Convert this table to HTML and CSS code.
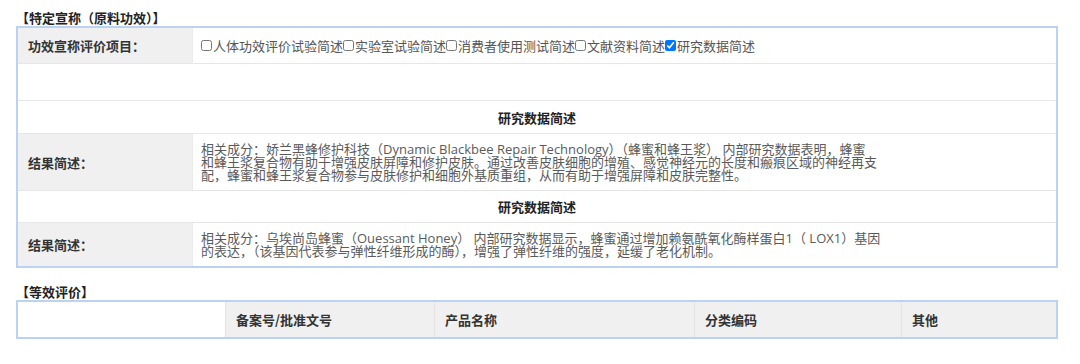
FILE: index.html
```html
<!DOCTYPE html>
<html lang="zh-CN">
<head>
<meta charset="utf-8">
<title>特定宣称</title>
<link rel="stylesheet" href="styles.css">
</head>
<body>
<div class="page">
  <div class="section-title">【特定宣称（原料功效）】</div>
  <table class="claim-table">
    <colgroup><col class="col-label"><col></colgroup>
    <tr class="row-items">
      <th class="label">功效宣称评价项目：</th>
      <td class="value">
        <label class="opt"><input type="checkbox">人体功效评价试验简述</label><label class="opt"><input type="checkbox">实验室试验简述</label><label class="opt"><input type="checkbox">消费者使用测试简述</label><label class="opt"><input type="checkbox">文献资料简述</label><label class="opt"><input type="checkbox" checked>研究数据简述</label>
      </td>
    </tr>
    <tr class="row-empty"><td colspan="2"></td></tr>
    <tr class="row-head"><td colspan="2">研究数据简述</td></tr>
    <tr class="row-result row-tall">
      <th class="label">结果简述：</th>
      <td class="value">
        <div class="desc">相关成分：娇兰黑蜂修护科技（Dynamic Blackbee Repair Technology）（蜂蜜和蜂王浆） 内部研究数据表明，蜂蜜<br>和蜂王浆复合物有助于增强皮肤屏障和修护皮肤。通过改善皮肤细胞的增殖、感觉神经元的长度和瘢痕区域的神经再支<br>配，蜂蜜和蜂王浆复合物参与皮肤修护和细胞外基质重组，从而有助于增强屏障和皮肤完整性。</div>
      </td>
    </tr>
    <tr class="row-head row-head-2"><td colspan="2">研究数据简述</td></tr>
    <tr class="row-result row-last">
      <th class="label">结果简述：</th>
      <td class="value">
        <div class="desc">相关成分：乌埃尚岛蜂蜜（Ouessant Honey） 内部研究数据显示，蜂蜜通过增加赖氨酰氧化酶样蛋白1（ LOX1）基因<br>的表达，（该基因代表参与弹性纤维形成的酶），增强了弹性纤维的强度，延缓了老化机制。</div>
      </td>
    </tr>
  </table>

  <div class="section-title section-gap">【等效评价】</div>
  <table class="equiv-table">
    <colgroup>
      <col class="c1"><col class="c2"><col class="c3"><col class="c4"><col>
    </colgroup>
    <tr>
      <td class="blank"></td>
      <th>备案号/批准文号</th>
      <th>产品名称</th>
      <th>分类编码</th>
      <th>其他</th>
    </tr>
  </table>
</div>
</body>
</html>
```

FILE: styles.css
```css
* {
  box-sizing: border-box;
}

body {
  margin: 0;
  background: #fff;
  color: #555;
  font-family: "Open Sans", "Noto Sans CJK SC", sans-serif;
  font-size: 13px;
}

.page {
  padding: 10px 0 0 16px;
  width: 1058px;
}

.section-title {
  font-family: "Noto Sans CJK SC", sans-serif;
  font-weight: bold;
  color: #222;
  font-size: 13px;
  line-height: 16px;
  height: 16px;
}

.section-gap {
  margin-top: 16px;
}

/* claim table */
.claim-table {
  width: 1042px;
  border: 2px solid #bcd2f2;
  border-collapse: separate;
  border-spacing: 0;
  table-layout: fixed;
}

.col-label {
  width: 175px;
}

.claim-table th,
.claim-table td {
  padding: 0;
  border-bottom: 1px solid #e6e6e6;
  vertical-align: middle;
}

.claim-table .label {
  background: #f0f0f0;
  color: #333;
  font-family: "Noto Sans CJK SC", sans-serif;
  font-weight: bold;
  text-align: left;
  padding-left: 10px;
  border-right: 1px solid #ebebeb;
}

.claim-table .value {
  padding-left: 8px;
  line-height: 13px;
}

.row-items th,
.row-items td {
  height: 36px;
}

.opt {
  display: inline-flex;
  align-items: center;
  font-family: "Noto Sans CJK SC", sans-serif;
}

.opt input {
  width: 11px;
  height: 11px;
  margin: 0 1px 0 0;
}

.row-empty td {
  height: 37px;
}

.row-head td {
  height: 33px;
  text-align: center;
  font-family: "Noto Sans CJK SC", sans-serif;
  font-weight: bold;
  color: #222;
}

.row-head-2 td {
  height: 32px;
}

.row-tall th,
.row-tall td {
  height: 57px;
}

.row-last th,
.row-last td {
  height: 43px;
  border-bottom: none;
}

.desc {
  line-height: 13px;
  white-space: nowrap;
  color: #5a5a5a;
}

/* equivalence table */
.equiv-table {
  width: 1042px;
  border: 2px solid #bcd2f2;
  border-collapse: separate;
  border-spacing: 0;
  table-layout: fixed;
}

.equiv-table .c1 { width: 207px; }
.equiv-table .c2 { width: 209px; }
.equiv-table .c3 { width: 260px; }
.equiv-table .c4 { width: 207px; }

.equiv-table td,
.equiv-table th {
  height: 35px;
  padding: 0 0 0 10px;
  vertical-align: middle;
}

.equiv-table .blank {
  background: #fff;
}

.equiv-table th {
  background: #f0f0f0;
  border-left: 1px solid #e4e4e4;
  text-align: left;
  color: #333;
  font-family: "Noto Sans CJK SC", sans-serif;
  font-weight: bold;
}
```
